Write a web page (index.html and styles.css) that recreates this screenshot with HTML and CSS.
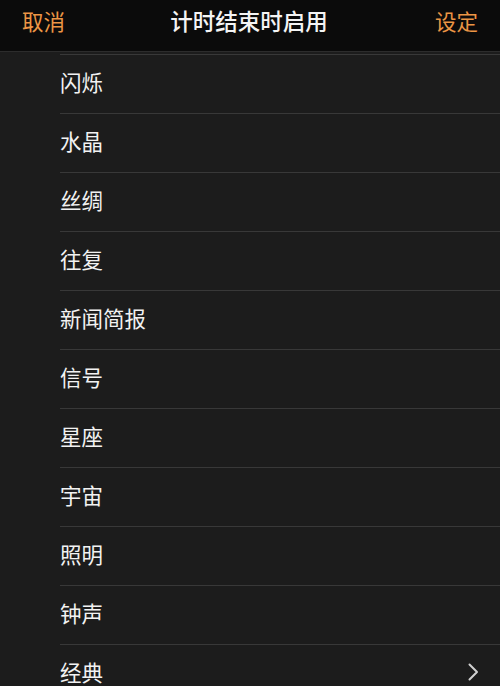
FILE: index.html
```html
<!DOCTYPE html>
<html lang="zh-CN">
<head>
<meta charset="utf-8">
<link rel="stylesheet" href="styles.css">
</head>
<body>
<div class="screen">
  <header class="nav">
    <span class="nav-btn">取消</span>
    <span class="nav-title">计时结束时启用</span>
    <span class="nav-btn">设定</span>
  </header>
  <ul class="list">
    <li class="row">闪烁</li>
    <li class="row">水晶</li>
    <li class="row">丝绸</li>
    <li class="row">往复</li>
    <li class="row">新闻简报</li>
    <li class="row">信号</li>
    <li class="row">星座</li>
    <li class="row">宇宙</li>
    <li class="row">照明</li>
    <li class="row">钟声</li>
    <li class="row">经典<svg class="chev" width="12" height="20" viewBox="0 0 12 20"><path d="M2.5 2.5 L10 10 L2.5 17.5" fill="none" stroke="#d0d0d0" stroke-width="2" stroke-linecap="round" stroke-linejoin="round"/></svg></li>
  </ul>
</div>
</body>
</html>
```
FILE: styles.css
```css
html, body {
  margin: 0;
  padding: 0;
  background: #1c1c1c;
}
body {
  width: 500px;
  height: 686px;
  overflow: hidden;
  font-family: "Noto Sans CJK SC", "Noto Sans", sans-serif;
}
.screen {
  display: flex;
  flex-direction: column;
}
.nav {
  height: 51px;
  background: #0b0b0b;
  border-bottom: 1px solid #2c2c2c;
  display: flex;
  align-items: center;
  justify-content: space-between;
  padding: 0 22px;
  box-sizing: content-box;
}
.nav-btn {
  color: #ec9645;
  font-size: 21.5px;
  line-height: 1;
  margin-top: -10px;
}
.nav-title {
  color: #f4f4f4;
  font-size: 22.5px;
  font-weight: 500;
  line-height: 1;
  margin-top: -10px;
  margin-right: 2px;
}
.list {
  list-style: none;
  margin: 0;
  padding: 2px 0 0 60px;
}
.row {
  height: 58px;
  border-top: 1px solid #383838;
  display: flex;
  align-items: center;
  justify-content: space-between;
  color: #f2f2f2;
  font-size: 21.5px;
  line-height: 1;
  padding-right: 21px;
  padding-bottom: 4px;
  box-sizing: border-box;
  height: 59px;
}
.chev {
  margin-top: 0;
}
```
